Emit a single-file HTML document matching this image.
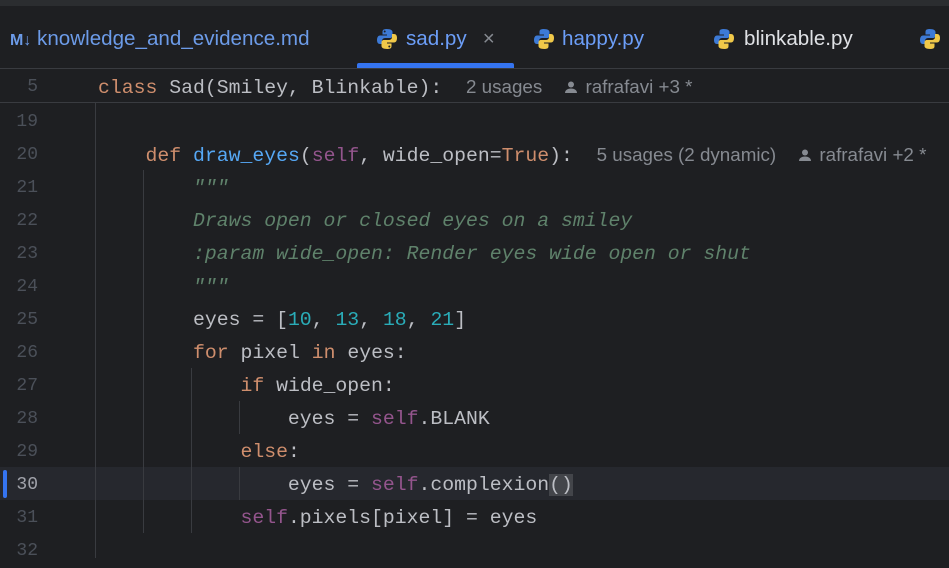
<!DOCTYPE html>
<html><head><meta charset="utf-8"><style>
body{margin:0;width:949px;height:558px;background:#1e1f22;overflow:hidden;position:relative;font-family:"Liberation Mono",monospace;}
.top{position:absolute;left:0;top:0;width:949px;height:6px;background:#2b2d30;}
.tabs{position:absolute;left:0;top:6px;width:949px;height:62px;background:#1e1f22;border-bottom:1px solid #393b40;font-family:"Liberation Sans",sans-serif;font-size:20.6px;}
.tab{position:absolute;top:0;height:62px;line-height:66px;white-space:nowrap;}
.tab svg{position:absolute;top:22px;left:0;}
.ul{position:absolute;left:357px;top:57px;width:157px;height:5px;background:#3574f0;border-radius:2px 2px 0 0;}
.row{position:absolute;left:0;width:949px;height:33px;line-height:34px;font-size:19.8px;color:#bcbec4;white-space:pre;}
.num{position:absolute;left:0;width:38px;text-align:right;color:#4b5059;font-size:18px;}
.code{position:absolute;left:98px;}
.k{color:#cf8e6d}.s{color:#94558d}.f{color:#56a8f5}.n{color:#2aacb8}.d{color:#5f826b;font-style:italic}
.h{font-family:"Liberation Sans",sans-serif;font-size:18.8px;color:#868a91;}
.p{display:inline-block;width:14px;height:14px;vertical-align:-1px;margin-left:22px;margin-right:2px;}
.g{position:absolute;width:1px;background:#393b40;}
</style></head><body>
<div class="top"></div>
<div class="tabs">
 <div class="tab" style="left:10px;color:#6c9be8"><span style="font-weight:bold;font-size:16px;color:#6c9be8">M↓</span> knowledge_and_evidence.md</div>
 <div class="tab" style="left:376px;color:#6c9ef8"><svg width="22" height="22" viewBox="0 0 22 22"><path d="M10.5 1c-4 0-4 2-4 3v2.5h4.5v1H4c-2 0-3 2-3 4.5S2 16 4 16h2v-3c0-2 1.5-3 3.5-3h4.5c1.5 0 2.5-1 2.5-2.5V4c0-1.5-1.5-3-6-3z" fill="#3d7ad6"/><path d="M11.5 21c4 0 4-2 4-3v-2.5H11v-1h7c2 0 3-2 3-4.5S20 6 18 6h-2v3c0 2-1.5 3-3.5 3H8c-1.5 0-2.5 1-2.5 2.5V18c0 1.5 1.5 3 6 3z" fill="#f0c849"/><circle cx="8.7" cy="3.5" r="1" fill="#1e1f22"/><circle cx="13.3" cy="18.5" r="1" fill="#1e1f22"/></svg><span style="margin-left:30px">sad.py</span><span style="margin-left:16px;color:#868a91">×</span></div>
 <div class="tab" style="left:533px;color:#6c9ef8"><svg width="22" height="22" viewBox="0 0 22 22"><path d="M10.5 1c-4 0-4 2-4 3v2.5h4.5v1H4c-2 0-3 2-3 4.5S2 16 4 16h2v-3c0-2 1.5-3 3.5-3h4.5c1.5 0 2.5-1 2.5-2.5V4c0-1.5-1.5-3-6-3z" fill="#3d7ad6"/><path d="M11.5 21c4 0 4-2 4-3v-2.5H11v-1h7c2 0 3-2 3-4.5S20 6 18 6h-2v3c0 2-1.5 3-3.5 3H8c-1.5 0-2.5 1-2.5 2.5V18c0 1.5 1.5 3 6 3z" fill="#f0c849"/></svg><span style="margin-left:29px">happy.py</span></div>
 <div class="tab" style="left:713px;color:#dfe1e5"><svg width="22" height="22" viewBox="0 0 22 22"><path d="M10.5 1c-4 0-4 2-4 3v2.5h4.5v1H4c-2 0-3 2-3 4.5S2 16 4 16h2v-3c0-2 1.5-3 3.5-3h4.5c1.5 0 2.5-1 2.5-2.5V4c0-1.5-1.5-3-6-3z" fill="#3d7ad6"/><path d="M11.5 21c4 0 4-2 4-3v-2.5H11v-1h7c2 0 3-2 3-4.5S20 6 18 6h-2v3c0 2-1.5 3-3.5 3H8c-1.5 0-2.5 1-2.5 2.5V18c0 1.5 1.5 3 6 3z" fill="#f0c849"/></svg><span style="margin-left:31px">blinkable.py</span></div>
 <div class="tab" style="left:919px"><svg width="22" height="22" viewBox="0 0 22 22"><path d="M10.5 1c-4 0-4 2-4 3v2.5h4.5v1H4c-2 0-3 2-3 4.5S2 16 4 16h2v-3c0-2 1.5-3 3.5-3h4.5c1.5 0 2.5-1 2.5-2.5V4c0-1.5-1.5-3-6-3z" fill="#3d7ad6"/><path d="M11.5 21c4 0 4-2 4-3v-2.5H11v-1h7c2 0 3-2 3-4.5S20 6 18 6h-2v3c0 2-1.5 3-3.5 3H8c-1.5 0-2.5 1-2.5 2.5V18c0 1.5 1.5 3 6 3z" fill="#f0c849"/></svg></div>
 <div class="ul"></div>
</div>
<div class="row" style="top:70px;border-bottom:1px solid #393b40;height:32px"><span class="num">5</span><span class="code"><span class="k">class</span> Sad(Smiley, Blinkable):  <span class="h">2 usages<svg class="p" viewBox="0 0 14 14"><circle cx="7" cy="4.5" r="3" fill="#868a91"/><path d="M1 13c0-3 3-4.5 6-4.5s6 1.5 6 4.5z" fill="#868a91"/></svg> rafrafavi +3 *</span></span></div>
<div style="position:absolute;left:0;top:467px;width:949px;height:33px;background:#26282e"></div>
<div style="position:absolute;left:3px;top:470px;width:4px;height:28px;background:#3574f0;border-radius:2px"></div>
<div class="g" style="left:95px;top:103px;height:455px"></div>
<div class="g" style="left:143px;top:170px;height:363px"></div>
<div class="g" style="left:191px;top:368px;height:165px"></div>
<div class="g" style="left:239px;top:401px;height:33px"></div>
<div class="g" style="left:239px;top:467px;height:33px"></div>
<div class="row" style="top:105px"><span class="num">19</span></div>
<div class="row" style="top:138px"><span class="num">20</span><span class="code">    <span class="k">def</span> <span class="f">draw_eyes</span>(<span class="s">self</span>, wide_open=<span class="k">True</span>):  <span class="h">5 usages (2 dynamic)<svg class="p" viewBox="0 0 14 14"><circle cx="7" cy="4.5" r="3" fill="#868a91"/><path d="M1 13c0-3 3-4.5 6-4.5s6 1.5 6 4.5z" fill="#868a91"/></svg> rafrafavi +2 *</span></span></div>
<div class="row" style="top:171px"><span class="num">21</span><span class="code">        <span class="d">"""</span></span></div>
<div class="row" style="top:204px"><span class="num">22</span><span class="code">        <span class="d">Draws open or closed eyes on a smiley</span></span></div>
<div class="row" style="top:237px"><span class="num">23</span><span class="code">        <span class="d">:param wide_open: Render eyes wide open or shut</span></span></div>
<div class="row" style="top:270px"><span class="num">24</span><span class="code">        <span class="d">"""</span></span></div>
<div class="row" style="top:303px"><span class="num">25</span><span class="code">        eyes = [<span class="n">10</span>, <span class="n">13</span>, <span class="n">18</span>, <span class="n">21</span>]</span></div>
<div class="row" style="top:336px"><span class="num">26</span><span class="code">        <span class="k">for</span> pixel <span class="k">in</span> eyes:</span></div>
<div class="row" style="top:369px"><span class="num">27</span><span class="code">            <span class="k">if</span> wide_open:</span></div>
<div class="row" style="top:402px"><span class="num">28</span><span class="code">                eyes = <span class="s">self</span>.BLANK</span></div>
<div class="row" style="top:435px"><span class="num">29</span><span class="code">            <span class="k">else</span>:</span></div>
<div class="row" style="top:468px"><span class="num" style="color:#a1a3ab">30</span><span class="code">                eyes = <span class="s">self</span>.complexion<span style="background:#43454a">()</span></span></div>
<div class="row" style="top:501px"><span class="num">31</span><span class="code">            <span class="s">self</span>.pixels[pixel] = eyes</span></div>
<div class="row" style="top:534px"><span class="num">32</span></div>
</body></html>
